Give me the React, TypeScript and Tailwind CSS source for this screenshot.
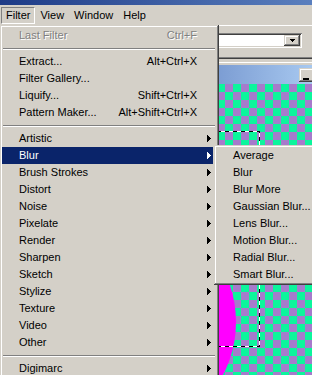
import React from "react";

const raised =
  "shadow-[inset_-1px_-1px_0_#404040,inset_1px_1px_0_#d4d0c8,inset_-2px_-2px_0_#808080,inset_2px_2px_0_#ffffff]";

function Arrow({ white }: { white?: boolean }) {
  const c = white ? "#ffffff" : "#000000";
  const widths = [1, 2, 3, 4, 3, 2, 1];
  return (
    <svg width="4" height="7" viewBox="0 0 4 7" className="block" shapeRendering="crispEdges">
      {widths.map((w, i) => (
        <rect key={i} x={0} y={i} width={w} height={1} fill={c} />
      ))}
    </svg>
  );
}

type RowProps = {
  label: string;
  shortcut?: string;
  arrow?: boolean;
  active?: boolean;
  disabled?: boolean;
};

function Row({ label, shortcut, arrow, active, disabled }: RowProps) {
  const color = active
    ? "bg-[#0a246a] text-white"
    : disabled
    ? "text-[#808080] [text-shadow:1px_1px_0_#ffffff]"
    : "text-black";
  return (
    <div className={`flex h-[17px] items-center pl-[17px] pr-[2px] leading-[17px] whitespace-nowrap ${color}`}>
      <span className="flex-1 pb-[1px]">{label}</span>
      {shortcut && <span className="mr-[14px] pb-[1px]">{shortcut}</span>}
      {arrow && (
        <span className="mr-[0px]">
          <Arrow white={active} />
        </span>
      )}
    </div>
  );
}

function Separator() {
  return (
    <div className="h-[9px] pt-[4px] pl-[1px] pr-0 -mr-[2px]">
      <div className="h-0 border-t border-b border-t-[#808080] border-b-white" />
    </div>
  );
}

const submenuItems = [
  "Average",
  "Blur",
  "Blur More",
  "Gaussian Blur...",
  "Lens Blur...",
  "Motion Blur...",
  "Radial Blur...",
  "Smart Blur...",
];

const filterGroups = [
  "Artistic",
  "Blur",
  "Brush Strokes",
  "Distort",
  "Noise",
  "Pixelate",
  "Render",
  "Sharpen",
  "Sketch",
  "Stylize",
  "Texture",
  "Video",
  "Other",
];

function MenuBarItem({ label, pressed }: { label: string; pressed?: boolean }) {
  return (
    <div
      className={`h-[17px] px-[4px] border leading-[15px] ${
        pressed ? "border-t-[#808080] border-l-[#808080] border-b-white border-r-white" : "border-transparent"
      }`}
    >
      {label}
    </div>
  );
}

export default function App() {
  return (
    <div className="relative w-[312px] h-[375px] overflow-hidden bg-[#d4d0c8] font-['Liberation_Sans',Arial,sans-serif] text-[11px] text-black">
      {/* window title strip */}
      <div className="h-[5px] bg-[linear-gradient(to_right,#1d3a86,#5a7fbe)]" />

      {/* menu bar */}
      <div className="flex h-[20px] items-start pt-[2px] pl-[1px]">
        <MenuBarItem label="Filter" pressed />
        <MenuBarItem label="View" />
        <MenuBarItem label="Window" />
        <MenuBarItem label="Help" />
      </div>

      {/* options bar */}
      <div className="flex h-[32px] justify-end border-t border-white pt-[7px] pr-[10px]">
        <div className="flex h-[15px] w-[150px] p-[2px] bg-white shadow-[inset_1px_1px_0_#808080,inset_-1px_-1px_0_#ffffff,inset_2px_2px_0_#404040,inset_-2px_-2px_0_#d4d0c8]">
          <div className="flex-1 bg-white" />
          <div className={`flex w-[16px] h-[11px] items-center justify-center bg-[#d4d0c8] ${raised}`}>
            <svg width="5" height="3" viewBox="0 0 5 3" shapeRendering="crispEdges" className="block">
              <rect x="0" y="0" width="5" height="1" fill="#000" />
              <rect x="1" y="1" width="3" height="1" fill="#000" />
              <rect x="2" y="2" width="1" height="1" fill="#000" />
            </svg>
          </div>
        </div>
      </div>

      {/* divider lines */}
      <div className="h-[8px]">
        <div className="h-[1px] bg-[#808080]" />
        <div className="h-[1px] bg-[#404040]" />
        <div className="h-[3px]" />
        <div className="h-[1px] bg-white" />
      </div>

      {/* document window */}
      <div className="ml-[153px] w-[200px]">
        <div className="flex h-[19px] items-start justify-end pt-[3px] pr-[38px] bg-[linear-gradient(to_right,#0a246a_0%,#7c9dd3_32.5%,#a8c9f0_80%)]">
          <div className={`w-[16px] h-[14px] bg-[#d4d0c8] ${raised}`}>
            <div className="mt-[10px] ml-[4px] w-[6px] h-[2px] bg-black" />
          </div>
        </div>
        <svg width="200" height="291" className="block" shapeRendering="crispEdges">
          <defs>
            <pattern id="chk" width="16" height="16" patternUnits="userSpaceOnUse">
              <rect x="0" y="0" width="16" height="16" fill="#a67bcb" />
              <rect x="0" y="0" width="8" height="8" fill="#0cf59c" />
              <rect x="8" y="8" width="8" height="8" fill="#0cf59c" />
            </pattern>
          </defs>
          <rect x="0" y="0" width="200" height="291" fill="url(#chk)" />
          <ellipse cx="-3" cy="238" rx="86" ry="100" fill="#ff00ff" shapeRendering="auto" />
          <path d="M0 47.5 H106.5 V262.5 H0" fill="none" stroke="#ffffff" strokeWidth="1" />
          <path d="M0 47.5 H106.5 V262.5 H0" fill="none" stroke="#000000" strokeWidth="1" strokeDasharray="4 4" />
        </svg>
      </div>

      {/* Filter dropdown menu */}
      <div className={`absolute left-0 top-[25px] w-[219px] bg-[#d4d0c8] pt-[2px] pl-[2px] pr-[6px] pb-[2px] ${raised}`}>
        <Row label="Last Filter" shortcut="Ctrl+F" disabled />
        <Separator />
        <Row label="Extract..." shortcut="Alt+Ctrl+X" />
        <Row label="Filter Gallery..." />
        <Row label="Liquify..." shortcut="Shift+Ctrl+X" />
        <Row label="Pattern Maker..." shortcut="Alt+Shift+Ctrl+X" />
        <Separator />
        {filterGroups.map((g) => (
          <Row key={g} label={g} arrow active={g === "Blur"} />
        ))}
        <Separator />
        <Row label="Digimarc" arrow />
      </div>

      {/* Blur submenu */}
      <div className={`absolute left-[214px] top-[145px] w-[110px] bg-[#d4d0c8] p-[2px] ${raised}`}>
        {submenuItems.map((s) => (
          <div key={s} className="h-[17px] pl-[17px] leading-[17px] whitespace-nowrap">
            <span className="pb-[1px]">{s}</span>
          </div>
        ))}
      </div>
    </div>
  );
}
